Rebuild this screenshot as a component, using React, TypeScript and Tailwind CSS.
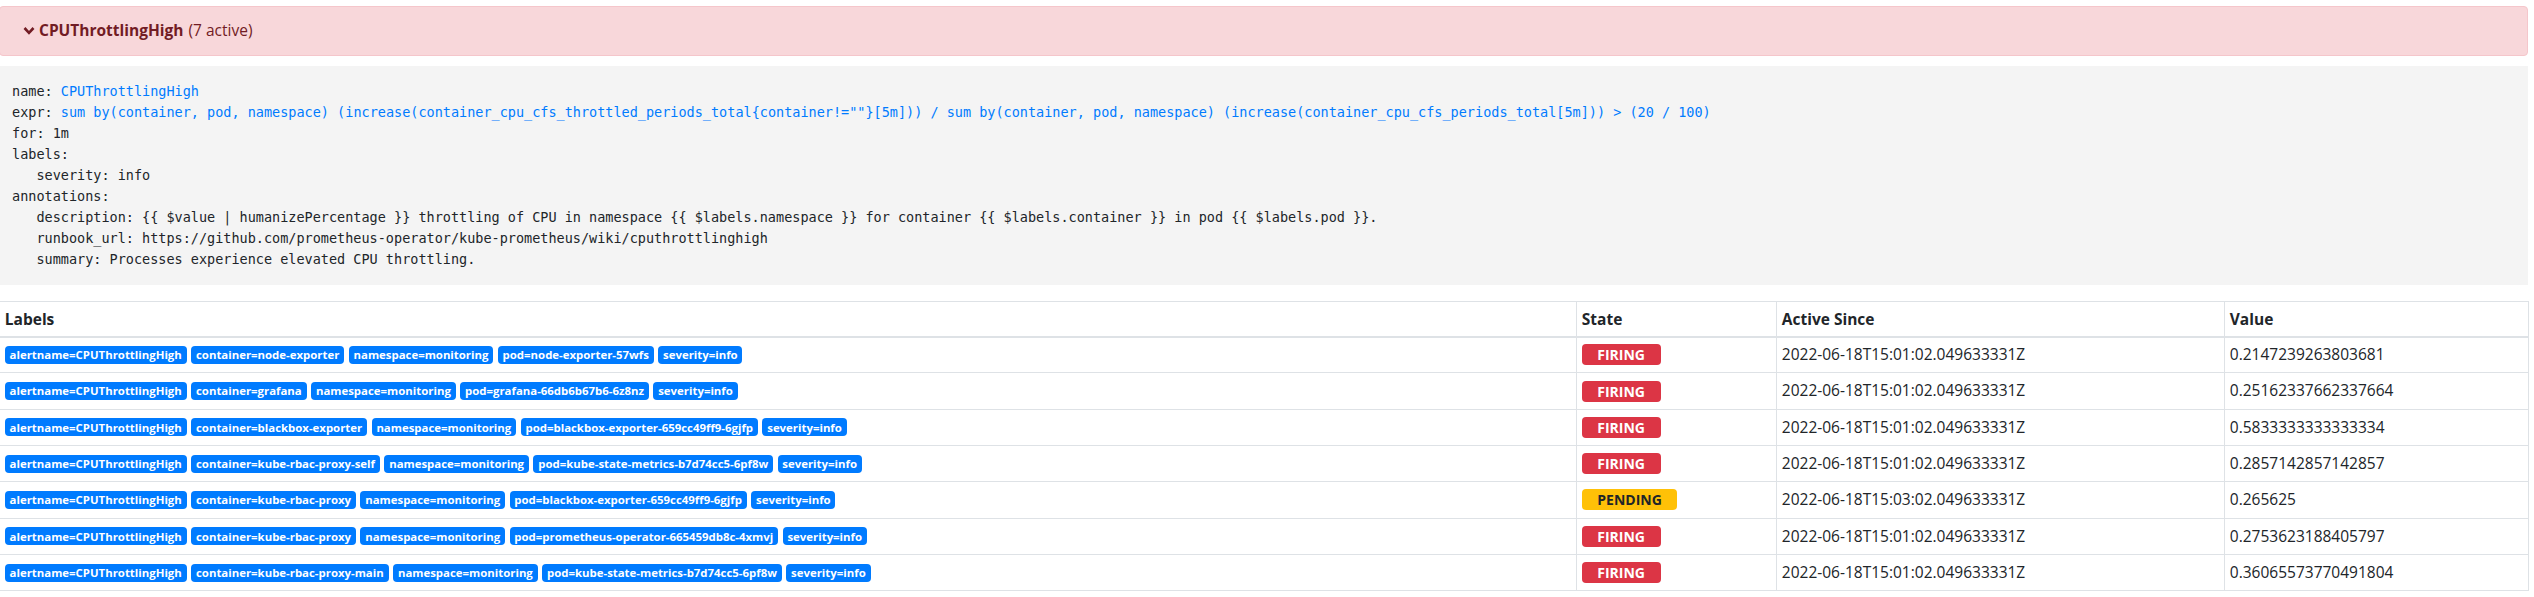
const RUNNING = "2022-06-18T15:01:02.049633331Z";

type Row = {
  container: string;
  pod: string;
  state: "FIRING" | "PENDING";
  since: string;
  value: string;
};

const rows: Row[] = [
  { container: "node-exporter", pod: "node-exporter-57wfs", state: "FIRING", since: RUNNING, value: "0.2147239263803681" },
  { container: "grafana", pod: "grafana-66db6b67b6-6z8nz", state: "FIRING", since: RUNNING, value: "0.25162337662337664" },
  { container: "blackbox-exporter", pod: "blackbox-exporter-659cc49ff9-6gjfp", state: "FIRING", since: RUNNING, value: "0.5833333333333334" },
  { container: "kube-rbac-proxy-self", pod: "kube-state-metrics-b7d74cc5-6pf8w", state: "FIRING", since: RUNNING, value: "0.2857142857142857" },
  { container: "kube-rbac-proxy", pod: "blackbox-exporter-659cc49ff9-6gjfp", state: "PENDING", since: "2022-06-18T15:03:02.049633331Z", value: "0.265625" },
  { container: "kube-rbac-proxy", pod: "prometheus-operator-665459db8c-4xmvj", state: "FIRING", since: RUNNING, value: "0.2753623188405797" },
  { container: "kube-rbac-proxy-main", pod: "kube-state-metrics-b7d74cc5-6pf8w", state: "FIRING", since: RUNNING, value: "0.36065573770491804" },
];

const EXPR =
  'sum by(container, pod, namespace) (increase(container_cpu_cfs_throttled_periods_total{container!=""}[5m])) / sum by(container, pod, namespace) (increase(container_cpu_cfs_periods_total[5m])) > (20 / 100)';

function Chevron() {
  return (
    <svg width="12" height="10" viewBox="0 0 12 10" className="mr-[4px] shrink-0">
      <polyline points="1.5,2 6,6.8 10.5,2" fill="none" stroke="currentColor" strokeWidth="2.6" />
    </svg>
  );
}

function LabelBadge({ text }: { text: string }) {
  return (
    <span className="inline-block rounded-[4px] bg-[#007bff] px-[4.8px] py-[3.3px] text-[11.4px] font-bold leading-none text-white">
      {text}
    </span>
  );
}

function StateBadge({ state }: { state: Row["state"] }) {
  const color = state === "FIRING" ? "bg-[#dc3545] text-white" : "bg-[#ffc107] text-[#212529]";
  return (
    <span className={`inline-flex h-[21px] items-center rounded-[4px] px-[15.5px] text-[14px] font-bold ${color}`}>
      {state}
    </span>
  );
}

export default function App() {
  const cell = "border border-[#dee2e6] px-[4.8px]";
  return (
    <div className="min-h-[597px] overflow-hidden bg-white font-['Open_Sans',sans-serif] text-[15.5px] text-[#212529]">
      <div className="ml-[-1px] w-[2529px] pt-[6px]">
        {/* alert rule header */}
        <div className="flex h-[50px] items-center rounded-[4px] border border-[#f5c6cb] bg-[#f8d7da] pl-[23px] text-[#721c24]">
          <Chevron />
          <span className="font-bold">CPUThrottlingHigh</span>
          <span className="ml-[5px]">(7 active)</span>
        </div>

        {/* rule definition */}
        <pre className="mt-[10px] whitespace-pre bg-[#f4f4f4] py-[15px] pl-[13px] font-['DejaVu_Sans_Mono',monospace] text-[13.5px] leading-[21px] text-[#212529]">
          <div>
            name: <span className="text-[#007bff]">CPUThrottlingHigh</span>
          </div>
          <div>
            expr: <span className="text-[#007bff]">{EXPR}</span>
          </div>
          <div>for: 1m</div>
          <div>labels:</div>
          <div>{"   severity: info"}</div>
          <div>annotations:</div>
          <div>
            {
              "   description: {{ $value | humanizePercentage }} throttling of CPU in namespace {{ $labels.namespace }} for container {{ $labels.container }} in pod {{ $labels.pod }}."
            }
          </div>
          <div>{"   runbook_url: https://github.com/prometheus-operator/kube-prometheus/wiki/cputhrottlinghigh"}</div>
          <div>{"   summary: Processes experience elevated CPU throttling."}</div>
        </pre>

        {/* active alerts */}
        <table className="mt-4 w-[2529px] table-fixed border-collapse border border-[#dee2e6]">
          <colgroup>
            <col className="w-[1577px]" />
            <col className="w-[200px]" />
            <col className="w-[448px]" />
            <col className="w-[304px]" />
          </colgroup>
          <thead>
            <tr>
              {["Labels", "State", "Active Since", "Value"].map((h) => (
                <th key={h} className={`${cell} border-b-2 py-[4.8px] text-left font-bold leading-6`}>
                  {h}
                </th>
              ))}
            </tr>
          </thead>
          <tbody>
            {rows.map((r, i) => (
              <tr key={i}>
                <td className={`${cell} h-[36.3px] py-0 align-middle`}>
                  <div className="flex gap-[4.6px]">
                    <LabelBadge text="alertname=CPUThrottlingHigh" />
                    <LabelBadge text={`container=${r.container}`} />
                    <LabelBadge text="namespace=monitoring" />
                    <LabelBadge text={`pod=${r.pod}`} />
                    <LabelBadge text="severity=info" />
                  </div>
                </td>
                <td className={`${cell} py-0 align-middle`}>
                  <div className="flex">
                    <StateBadge state={r.state} />
                  </div>
                </td>
                <td className={`${cell} py-0 align-middle`}>{r.since}</td>
                <td className={`${cell} py-0 align-middle`}>{r.value}</td>
              </tr>
            ))}
          </tbody>
        </table>
      </div>
    </div>
  );
}
